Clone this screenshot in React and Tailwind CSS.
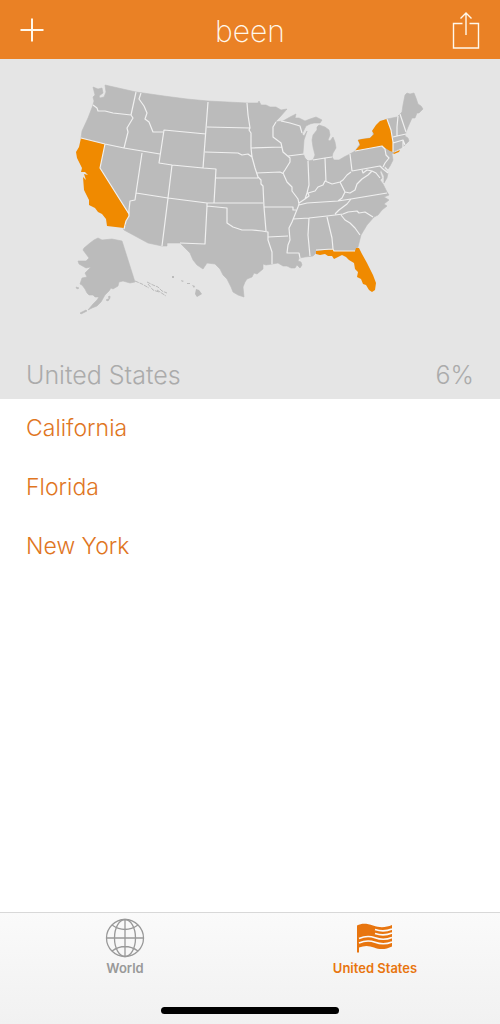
const mainland =
  "M93 87L98 89L102 88L103 93L99 96L100 98L104 97L106 92L105 85L136 92L164 96L187 99L208 101L247 103L258 103L259 101L261 105L266 105L270 107L276 107L281 110L287 109L280 117L275 122L283 121L290 117L296 114L295 118L299 118L305 121L310 119L316 117L322 120L320 123L314 123L310 124L306 126L304 130L302 134L304 136L307 131L304 140L303 153L305 158L308 161L313 160L315 155L313 147L312 140L313 135L317 130L317 127L319 125L325 127L329 130L330 135L328 140L330 141L333 137L335 142L336 148L333 153L332 157L334 160L339 160L344 157L350 154L355 151L360 144L358 140L370 138L373 135L373 130L380 122L387 119L397 117L400 114L402 112L403 105L405 95L407 93L410 94L414 93L416 98L418 104L421 106L423 109L419 113L417 113L415 118L412 118L408 127L406 132L405 136L408 138L409 141L407 143L403 147L395 151L392 154L393 160L390 166L388 169L385 166L384 168L388 173L387 178L384 183L384 176L381 170L380 172L382 178L380 180L383 184L387 192L389 195L384 197L389 200L384 204L387 206L382 210L378 215L374 217L367 225L361 235L358 247L356 251L316 253L313 256L305 257L299 258L298 261L301 262L302 265L300 268L297 265L295 268L291 268L287 266L283 266L278 263L272 264L266 265L263 264L263 269L257 274L254 273L252 277L247 279L245 282L243 287L244 297L238 295L233 292L231 287L227 279L223 275L220 269L215 264L207 263L203 269L197 265L193 260L190 253L187 250L182 245L180 243L167 243L167 246L162 246L148 243L124 230L81 138L82 131L88 118L93 105L94 101L93 97L95 95Z";

const california =
  "M81 138L105 144L100 168L128 213L129 216L126 221L126 225L124 228L107 226L106 219L102 214L98 212L95 208L89 205L89 200L84 190L83 177L86 180L84 174L88 175L85 172L81 172L82 168L77 158L76 152L79 147Z";
const newYork =
  "M355 151L360 145L358 140L362 139L370 138L374 134L372 131L376 125L380 121L387 119L391 130L393 142L393 152L390 151L385 148L382 146ZM393 153L400 150L399 152L394 154Z";
const florida =
  "M316 251L333 249L334 251L355 251L356 248L359 248L362 254L367 263L373 275L376 283L375 290L372 292L369 290L366 285L363 284L361 279L357 277L358 272L355 269L354 263L349 260L346 257L342 255L338 257L334 259L332 256L328 256L325 254L320 255L316 254Z";

const alaska =
  "M98 238L102 240L112 239L122 241L135 282L130 283L123 281L119 282L118 286L113 289L111 288L109 291L105 295L101 302L97 306L92 308L88 310L93 304L97 300L99 297L95 297L93 295L89 295L87 293L85 289L82 285L80 284L82 278L87 277L85 273L91 267L86 268L79 264L78 261L86 261L89 258L86 254L83 250L84 248L90 243L94 240ZM80 313l6-3l1 1l-6 3zM76 287l3 1l-2 1zM106 300l4-2l-2 3zM108 297l2-1v2z";
const hawaii =
  "M196 289L199 290L202 294L197 297L195 294ZM172 276h2v2h-2zM181 280l3 1l-2 1zM187 283h3v1h-3zM192 285l3 1l-1 2z";

const borders = [
  "M93 105L97 108L98 111L105 111L113 113L131 115L133 118L130 123L127 128L128 132L124 148",
  "M136 92L131 115",
  "M141 93L139 99L144 106L147 113L145 119L149 122L153 132L163 132",
  "M81 138L105 144L124 148L160 154",
  "M206 134L164 130L159 163L172 165L203 168L216 169L214 203",
  "M142 153L136 193L135 200L130 201L129 210L129 216L126 221L124 229",
  "M105 144L100 168L129 214",
  "M136 193L168 198L207 203L263 203",
  "M172 165L168 198L162 246",
  "M208 102L203 168",
  "M207 127L250 128",
  "M205 152L238 153L242 155L248 154L252 157",
  "M216 178L258 178",
  "M247 103L248 115L250 128L249 130L251 133L251 148L252 157L255 168L258 177L261 180L261 184L263 186L264 207L266 231",
  "M251 148L282 147",
  "M256 173L280 172L284 174",
  "M276 122L273 127L273 137L281 143L283 152L290 158L290 162L285 170L283 173L287 182L292 187L292 191L298 199L299 204L298 207L296 212L292 222L289 228L290 240L288 245L287 253L299 253L300 258",
  "M288 156L304 154",
  "M281 121L290 123L300 126L302 133",
  "M308 161L309 185L307 193L305 199L299 203",
  "M305 199L309 196L308 193L315 191L318 187L323 185L325 181L332 184L340 182L343 180L347 175L351 172",
  "M325 158L326 182",
  "M313 160L325 158L332 157",
  "M350 154L352 171L380 166L383 169L388 173",
  "M355 151L382 146L385 149L386 155L389 158L385 163L383 167",
  "M340 182L343 188L345 192L350 193L355 190L357 184L362 179L368 175L372 171L376 173L380 178",
  "M345 192L342 198L338 201",
  "M362 170L363 173L367 170L372 171",
  "M299 205L307 203L338 201L351 199L387 193",
  "M351 199L347 204L343 207L339 210L335 214",
  "M293 219L309 218L327 216L343 214L348 212L357 211L359 213L365 212L373 217",
  "M341 215L345 220L350 223L355 228L360 235",
  "M327 217L332 238L333 249",
  "M309 218L308 235L310 256",
  "M316 250L333 249L334 251L355 251",
  "M264 207L293 207L293 210L296 210",
  "M268 237L288 236",
  "M207 203L207 206L227 208L227 223L233 227L242 230L252 230L262 231L268 232L268 240L272 252L272 264",
  "M207 206L205 244L180 243",
  "M387 119L391 130L393 142L393 152",
  "M398 116L397 127L397 136",
  "M400 114L406 132",
  "M393 137L397 136L406 134",
  "M393 143L403 140L405 145M403 140L403 148",
].join("");

function StatesMap() {
  return (
    <svg viewBox="0 59 500 282" className="block w-full" role="img" aria-label="Map of visited states">
      <path d={mainland} fill="#bbb" stroke="#bbb" strokeWidth="0.6" />
      <path d={alaska} fill="#bbb" stroke="#bbb" strokeWidth="0.6" />
      <path d={hawaii} fill="#bbb" />
      <path
        d="M135 281L142 284L149 288M147 282L153 285L158 287L162 291L167 293M148 284L153 290L159 292M157 290L166 296"
        fill="none"
        stroke="#bbb"
        strokeDasharray="4 1"
      />
      <path d={california} fill="#f08a00" />
      <path d={newYork} fill="#f08a00" />
      <path d={florida} fill="#f08a00" />
      <path d={borders} fill="none" stroke="#f0f0f0" strokeWidth="1.2" strokeLinejoin="round" />
    </svg>
  );
}

function PlusIcon() {
  return (
    <svg width="24" height="24" viewBox="0 0 24 24" fill="none" stroke="currentColor" strokeWidth="2" aria-hidden="true">
      <path d="M0.5 12H23.5M12 0.5V23.5" />
    </svg>
  );
}

function ShareIcon() {
  return (
    <svg width="28" height="38" viewBox="0 0 28 38" fill="none" stroke="currentColor" strokeWidth="1.4" aria-hidden="true">
      <path d="M10.5 12.500H1.500V37H26.500V12.500H17.500M14 24V2M8.500 7.500L14 2L19.500 7.500" />
    </svg>
  );
}

function GlobeIcon() {
  return (
    <svg width="40" height="40" viewBox="0 0 40 40" fill="none" stroke="currentColor" strokeWidth="1.3" aria-hidden="true">
      <circle cx="20" cy="20" r="18.5" />
      <ellipse cx="20" cy="20" rx="10.5" ry="18.5" />
      <path d="M20 1.5V38.5M1.5 20H38.5M7 7Q20 16 33 7M7 33Q20 24 33 33" />
    </svg>
  );
}

function FlagIcon() {
  return (
    <svg width="36" height="40" viewBox="0 0 36 40" aria-hidden="true">
      <path d="M0 7.500C5 5 10 5.500 16 7.500C23 10 29 9.500 35 7V28.500C29 31.500 23 32 17 29.500C12 27.500 7 27.500 2 29.500V34.500H0Z" fill="currentColor" />
      <path
        d="M18 11.500C24 13.500 29 13.500 35 11M18 15.500C24 17.500 29 17.500 35 15M2 20.500C8 18 13 18 18 19.800C24 22 29 22 35 19.500M2 25C8 22.500 13 22.500 18 24.300C24 26.500 29 26.500 35 24"
        fill="none"
        stroke="#fafafa"
        strokeWidth="1.6"
      />
    </svg>
  );
}

const visited = ["California", "Florida", "New York"];

export default function App() {
  return (
    <div className="flex min-h-screen flex-col bg-white font-['Inter',sans-serif]">
      <header className="grid h-[59px] grid-cols-[1fr_auto_1fr] items-center bg-[#ea8125] px-5 text-[#fff8ec]">
        <button type="button" aria-label="Add" className="justify-self-start">
          <PlusIcon />
        </button>
        <h1 className="pt-0.5 text-[30px] leading-9 font-extralight">been</h1>
        <button type="button" aria-label="Share" className="justify-self-end">
          <ShareIcon />
        </button>
      </header>

      <section className="bg-[#e5e5e5]">
        <StatesMap />
        <div className="flex h-[58px] items-center justify-between px-[26px] pt-3 text-[25px] font-light text-[#ababab]">
          <h2>United States</h2>
          <span>6%</span>
        </div>
      </section>

      <main className="flex-1">
        <ul>
          {visited.map((name) => (
            <li key={name} className="flex h-[59px] items-center px-[26px] text-[23px] font-light text-[#e0761f]">
              {name}
            </li>
          ))}
        </ul>
      </main>

      <footer className="border-t border-[#d8d8d8] bg-linear-to-b from-[#fafafa] to-[#f1f1f1]">
        <nav className="grid grid-cols-2 pt-[5px] text-[13px] leading-5 font-semibold">
          <a href="#world" className="flex flex-col items-center text-[#999]">
            <GlobeIcon />
            World
          </a>
          <a href="#united-states" aria-current="page" className="flex flex-col items-center text-[#e8750f]">
            <FlagIcon />
            United States
          </a>
        </nav>
        <div className="mx-auto mt-[29px] mb-2.5 h-[7px] w-[178px] rounded-full bg-black" />
      </footer>
    </div>
  );
}
